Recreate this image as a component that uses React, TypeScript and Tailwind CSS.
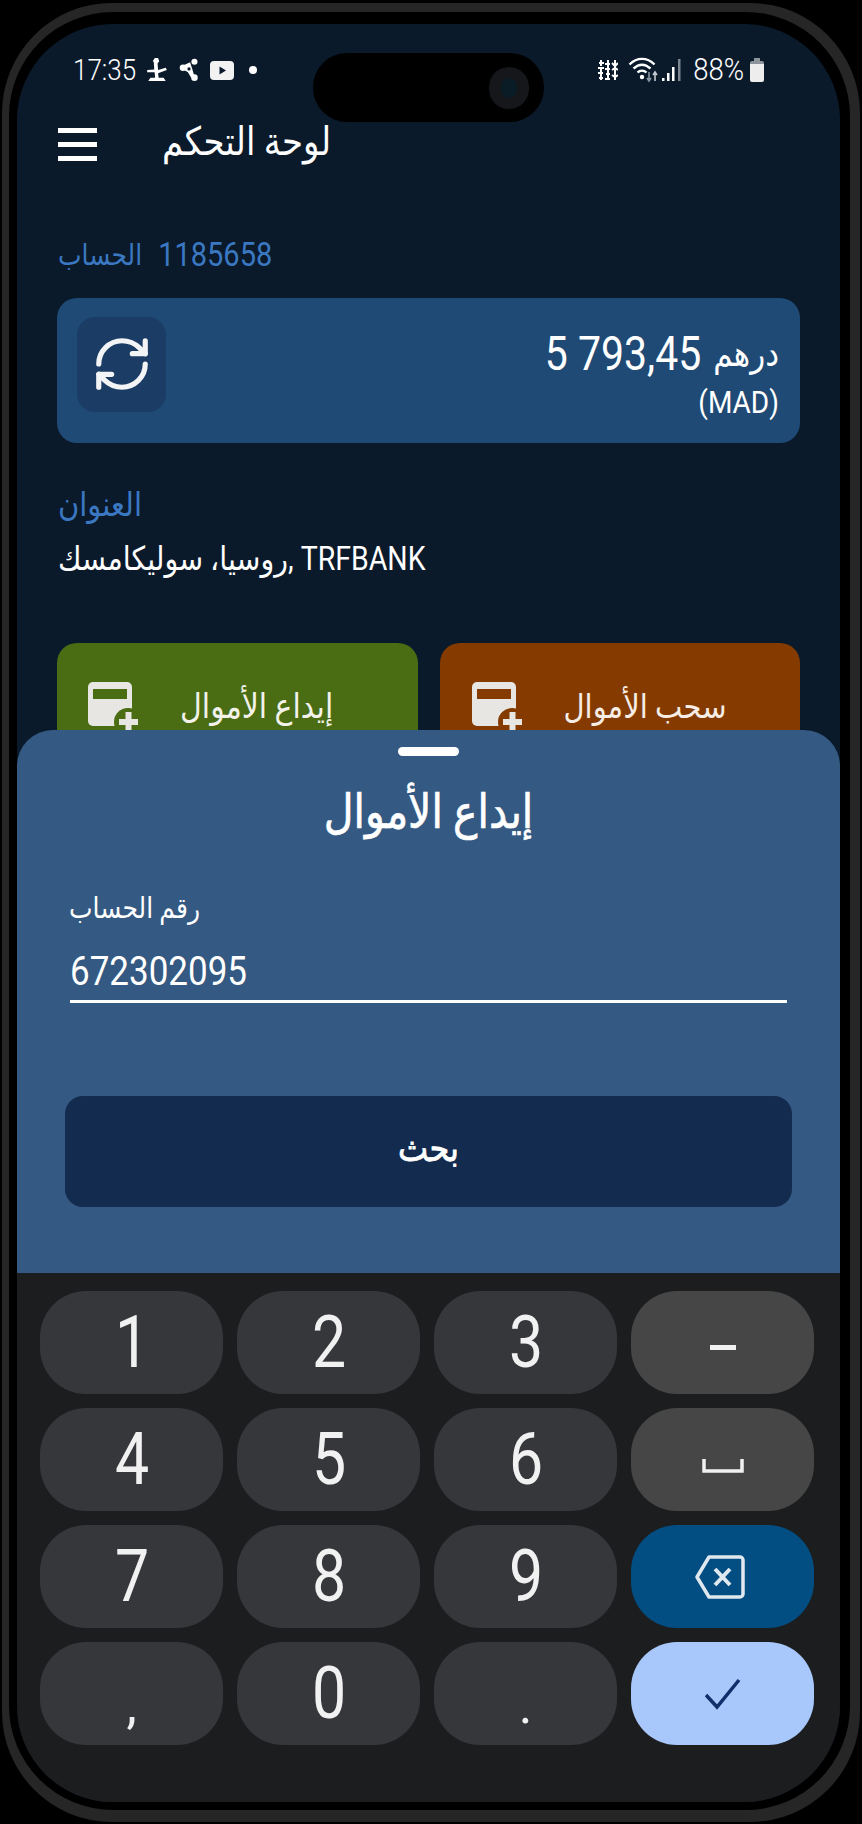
import React from "react";
import { RefreshCw } from "lucide-react";

const ar = "font-['Roboto','DejaVu_Sans',sans-serif]";
const tall = "inline-block scale-y-[1.15]";

function TopIconA() {
  return (
    <svg width="22" height="24" viewBox="0 0 20 22" fill="#fff">
      <path d="M8 0h3l1 3-1.500 2 .5 6 7-2 1 2-8 3 .5 4H16l2 3H2l2-3h4.300l-.5-5-6.800 0 0-2 6.500-.5-.5-7L6 3z" />
    </svg>
  );
}

function TopIconB() {
  return (
    <svg width="20" height="24" viewBox="0 0 18 22" fill="#fff">
      <circle cx="14" cy="3.500" r="2.800" />
      <circle cx="3.500" cy="9" r="3" />
      <circle cx="14" cy="18" r="3" />
      <path d="M3 7l7-3 2 6 2 7-3 1-3-5-5-3z" />
      <circle cx="9" cy="10" r="1.500" fill="#0b1a2b" />
    </svg>
  );
}

function YouTube() {
  return (
    <svg width="24" height="19" viewBox="0 0 24 19">
      <rect width="24" height="19" rx="4" fill="#f2f2f2" />
      <path d="M9.500 5.500l6.500 4-6.500 4z" fill="#0b1a2b" />
    </svg>
  );
}

function Cluster() {
  return (
    <svg width="22" height="22" viewBox="0 0 22 22" stroke="#fff" strokeWidth="2" fill="none">
      <path d="M5 1v6M3 4h5M2 9h6M5 9v12M2 14h5M3 19h4" />
      <path d="M12 1v20M9 5h5M9 10h5M10 15h4M9 20h5" />
      <path d="M19 1v20M16 4l3 3 3-3M16 11l3-2 3 2M16 16l3 2 3-2" />
    </svg>
  );
}

function Wifi() {
  return (
    <svg width="32" height="26" viewBox="0 0 32 26" fill="none">
      <path d="M1.500 7.500C9 0 19 0 26.500 7.500" stroke="#fff" strokeWidth="2.400" />
      <path d="M5.500 11.500C11 6.500 17 6.500 22.500 11.500" stroke="#fff" strokeWidth="2.400" />
      <path d="M9.500 15.500C12 13 16 13 18.500 15.500" stroke="#fff" strokeWidth="2.400" />
      <circle cx="14" cy="20" r="2.200" fill="#fff" />
      <path d="M21 15v8M19 21l2 3 2-3" stroke="#8a93a0" strokeWidth="1.600" />
      <path d="M27 24v-8M25 18l2-3 2 3" stroke="#c4c9d0" strokeWidth="1.600" />
    </svg>
  );
}

function Signal() {
  return (
    <svg width="20" height="24" viewBox="0 0 20 24">
      <rect x="0" y="20" width="2.500" height="3" fill="#fff" />
      <rect x="5" y="15" width="2.500" height="8" fill="#fff" />
      <rect x="10" y="9" width="2.500" height="14" fill="#fff" />
      <rect x="16" y="1" width="2.500" height="22" fill="#7d8691" />
    </svg>
  );
}

function Battery() {
  return (
    <svg width="14" height="24" viewBox="0 0 14 24">
      <path d="M4 0h6v3H4z" fill="#8d949c" />
      <path d="M2 3h10a2 2 0 0 1 2 2v1H0V5a2 2 0 0 1 2-2z" fill="#8d949c" />
      <path d="M0 6h14v16a2 2 0 0 1-2 2H2a2 2 0 0 1-2-2z" fill="#ededed" />
    </svg>
  );
}

function CardPlus({ win }: { win: string }) {
  return (
    <svg width="50" height="62" viewBox="0 0 50 62">
      <rect x="0" y="0" width="44" height="44" rx="5" fill="#e8e6e2" />
      <rect x="5" y="7" width="34" height="10" fill={win} />
      <circle cx="40" cy="40" r="14" fill={win} />
      <path d="M31 40h19M40.500 30v20" stroke="#e8e6e2" strokeWidth="6" />
    </svg>
  );
}

function Key({ children, className }: { children: React.ReactNode; className: string }) {
  return (
    <div className={`h-[103px] rounded-[46px] flex items-center justify-center ${className}`}>{children}</div>
  );
}

const digitKey = "bg-[#35373b] text-[#f1f1f1] text-[64px] font-['Roboto',sans-serif] font-normal";
const funcKey = "bg-[#454645]";
const digit = "inline-block scale-y-[1.14] scale-x-[0.95]";

export default function App() {
  return (
    <div className="w-[862px] h-[1824px] bg-black pt-[3px] pb-[2px] px-[2px]">
      <div className="w-full h-full rounded-[110px] bg-[#262626] pt-[9px] pb-[12px] pl-[7px] pr-[10px]">
        <div className="w-full h-full rounded-[104px] bg-black pt-[12px] pb-[8px] pl-[8px] pr-[10px]">
          <div className="relative w-full h-full rounded-[96px] overflow-hidden bg-[#0b1a2b]">
            {/* status bar */}
            <div className={`flex items-center justify-between h-[30px] mt-[31px] pl-[56px] pr-[76px] text-white ${ar}`}>
              <div className="flex items-center">
                <span className={`text-[26px] font-light w-[73px] ${tall}`}>17:35</span>
                <div className="flex items-center gap-[11px]">
                  <TopIconA />
                  <TopIconB />
                  <YouTube />
                  <span className="w-[8px] h-[8px] rounded-full bg-white ml-[4px]" />
                </div>
              </div>
              <div className="flex items-center">
                <Cluster />
                <div className="ml-[10px]"><Wifi /></div>
                <div className="ml-[2px]"><Signal /></div>
                <span className={`text-[27.500px] font-light ml-[11px] ${tall}`}>88%</span>
                <div className="ml-[6px]"><Battery /></div>
              </div>
            </div>

            {/* camera pill */}
            <div className="absolute left-[296px] top-[29px] w-[231px] h-[69px] rounded-[34px] bg-black flex items-center justify-end pr-[15px]">
              <div className="w-[40px] h-[42px] rounded-full bg-[#15171a] flex items-center justify-center">
                <div className="w-[16px] h-[20px] rounded-full bg-[#0a1c26]" />
              </div>
            </div>

            {/* app bar */}
            <div className="flex items-center h-[50px] mt-[34px] pl-[41px]">
              <div className="w-[39px] flex flex-col gap-[9px]">
                <div className="h-[5px] bg-white" />
                <div className="h-[5px] bg-white" />
                <div className="h-[5px] bg-white" />
              </div>
              <span className={`ml-[65px] mb-[6px] text-[34px] text-white ${tall}`}>
                <span className={ar}>لوحة التحكم</span>
              </span>
            </div>

            {/* account */}
            <div className={`flex items-center gap-[16px] mt-[65px] pl-[41px] text-[#3a78c2] ${ar}`}>
              <span className={`text-[25px] ${tall}`}>الحساب</span>
              <span className={`text-[29px] ${tall}`}>1185658</span>
            </div>

            {/* balance */}
            <div className="flex items-start justify-between mt-[20px] mx-[40px] h-[145px] rounded-[20px] bg-[#1f4a75] pt-[19px] pl-[20px] pr-[21px]">
              <div className="w-[89px] h-[95px] rounded-[18px] bg-[#1b3c64] flex items-center justify-center">
                <RefreshCw size={62} strokeWidth={2} color="#f2f4f6" />
              </div>
              <div dir="rtl" className={`text-white ${ar} pt-[12px]`}>
                <div className="flex items-center gap-[12px] leading-[50px] scale-y-[1.15]">
                  <span className="text-[31px]">درهم</span>
                  <span dir="ltr" className="text-[41px]">5 793,45</span>
                </div>
                <div className="text-[28px] leading-[36px] mt-[6px] scale-y-[1.15]">(MAD)</div>
              </div>
            </div>

            {/* address */}
            <div className={`mt-[41px] pl-[41px] text-[29px] leading-[40px] text-[#3a78c2] ${ar}`}>
              <span className={tall}>العنوان</span>
            </div>
            <div className="mt-[16px] pl-[41px] flex justify-start">
              <span dir="rtl" className={`text-[28.500px] leading-[40px] text-white ${ar} ${tall}`}>TRFBANK ,روسيا، سوليكامسك</span>
            </div>

            {/* actions */}
            <div className="grid grid-cols-2 gap-[22px] mt-[63px] mx-[40px]">
              <div className="h-[120px] rounded-[20px] bg-[#4a6d14] flex pt-[39px] pl-[31px]">
                <CardPlus win="#4a6d14" />
                <span className={`ml-[42px] mt-[7px] text-[30px] leading-[40px] text-[#f2f2ea] ${ar} ${tall}`}>إيداع الأموال</span>
              </div>
              <div className="h-[120px] rounded-[20px] bg-[#853b00] flex pt-[39px] pl-[32px]">
                <CardPlus win="#853b00" />
                <span className={`ml-[42px] mt-[7px] text-[29px] leading-[40px] text-[#f5ede6] ${ar} ${tall}`}>سحب الأموال</span>
              </div>
            </div>

            {/* bottom sheet and keyboard */}
            <div className="absolute left-0 right-0 bottom-0 flex flex-col">
              <div className="h-[543px] rounded-t-[36px] bg-[#345982] flex flex-col">
                <div className="self-center w-[61px] h-[9px] rounded-full bg-white mt-[17px]" />
                <div className={`text-center text-[41px] leading-[56px] text-white mt-[28px] [-webkit-text-stroke:0.6px_white] ${ar}`}>
                  <span className={tall}>إيداع الأموال</span>
                </div>
                <div className={`pl-[52px] mt-[51px] text-[25px] leading-[36px] text-white ${ar}`}>
                  <span className={tall}>رقم الحساب</span>
                </div>
                <div className={`mx-[53px] mt-[23px] pb-[6px] text-[35px] leading-[44px] text-white border-b-[3px] border-white ${ar}`}>
                  <span className={tall}>672302095</span>
                </div>
                <div className="mx-[48px] mt-[93px] h-[111px] rounded-[18px] bg-[#122b4e] flex items-center justify-center">
                  <span className={`text-[32px] mb-[8px] text-white [-webkit-text-stroke:0.7px_white] ${ar} ${tall}`}>بحث</span>
                </div>
              </div>
              <div className="h-[529px] bg-[#1c1d1e] pl-[23px] pr-[26px] pt-[18px]">
                <div className="grid grid-cols-4 gap-x-[14px] gap-y-[14px]">
                  <Key className={digitKey}><span className={digit}>1</span></Key>
                  <Key className={digitKey}><span className={digit}>2</span></Key>
                  <Key className={digitKey}><span className={digit}>3</span></Key>
                  <Key className={funcKey}>
                    <svg className="mt-[10px]" width="26" height="6" viewBox="0 0 26 6"><rect width="26" height="5" fill="#f1f1f1" /></svg>
                  </Key>
                  <Key className={digitKey}><span className={digit}>4</span></Key>
                  <Key className={digitKey}><span className={digit}>5</span></Key>
                  <Key className={digitKey}><span className={digit}>6</span></Key>
                  <Key className={funcKey}>
                    <svg className="mt-[12px]" width="42" height="14" viewBox="0 0 42 14" fill="none"><path d="M2 0v12h38V0" stroke="#f1f1f1" strokeWidth="3.500" /></svg>
                  </Key>
                  <Key className={digitKey}><span className={digit}>7</span></Key>
                  <Key className={digitKey}><span className={digit}>8</span></Key>
                  <Key className={digitKey}><span className={digit}>9</span></Key>
                  <Key className="bg-[#024d81]">
                    <svg className="mr-[6px]" width="50" height="44" viewBox="0 0 50 44" fill="none" stroke="#dfe8ee">
                      <path d="M14 2h31a3 3 0 0 1 3 3v34a3 3 0 0 1-3 3H14L2 22z" strokeWidth="3.500" strokeLinejoin="round" />
                      <path d="M20 14l15 16M35 14L20 30" strokeWidth="4" />
                    </svg>
                  </Key>
                  <Key className={digitKey}><span className="mt-[24px] text-[52px] font-normal">,</span></Key>
                  <Key className={digitKey}><span className={digit}>0</span></Key>
                  <Key className={digitKey}><span className="mt-[24px] text-[52px] font-normal">.</span></Key>
                  <Key className="bg-[#a8c7fa]">
                    <svg width="36" height="32" viewBox="0 0 36 32" fill="none" stroke="#0f2f6b" strokeWidth="3.500"><path d="M1 17l11 12L34 2" /></svg>
                  </Key>
                </div>
              </div>
            </div>
          </div>
        </div>
      </div>
    </div>
  );
}
